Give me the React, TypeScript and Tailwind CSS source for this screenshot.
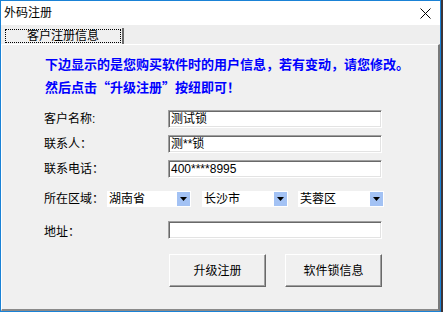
import React from "react";

const font = "font-['Liberation_Sans','Noto_Sans_CJK_SC',sans-serif]";

function TextBox({ value }: { value: string }) {
  return (
    <div className="w-[214px] h-[18px] bg-white border border-t-[#a0a0a0] border-l-[#a0a0a0] border-r-white border-b-white shadow-[inset_1px_1px_0_#696969,inset_-1px_-1px_0_#e3e3e3] flex items-center pl-[2px] text-[12px] leading-none text-black">
      {value}
    </div>
  );
}

function Combo({ value, width }: { value: string; width: string }) {
  return (
    <div className={`${width} h-[16px] bg-white flex items-center justify-between pl-[2px] pr-[1px]`}>
      <span className="text-[12px] leading-none text-black">{value}</span>
      <span className="w-[13px] h-[14px] bg-[#a3c2f4] flex items-center justify-center">
        <svg width="7" height="4" viewBox="0 0 7 4">
          <path d="M0 0h7L3.5 4z" fill="#000" />
        </svg>
      </span>
    </div>
  );
}

function Button({ label }: { label: string }) {
  return (
    <button className="w-[97px] h-[33px] bg-[#f0f0f0] border border-t-white border-l-white border-r-[#696969] border-b-[#696969] shadow-[inset_-1px_-1px_0_#a0a0a0] text-[12px] text-black leading-none">
      {label}
    </button>
  );
}

export default function App() {
  const rows = [
    { label: "客户名称:", value: "测试锁" },
    { label: "联系人：", value: "测**锁" },
    { label: "联系电话：", value: "400****8995" },
  ];

  return (
    <div className={`w-[443px] h-[312px] bg-[#3d3436] ${font}`}>
      <div className="w-[441px] h-[312px] border border-[#1a82d6] flex flex-col bg-[#f0f0f0]">
        {/* Title bar */}
        <div className="h-[24px] bg-white flex items-center justify-between pl-[3px] pr-[9px]">
          <span className="text-[12px] text-black leading-none">外码注册</span>
          <svg width="11" height="11" viewBox="0 0 11 11">
            <path d="M0.5 0.5L10.5 10.5M10.5 0.5L0.5 10.5" stroke="#000" strokeWidth="1" />
          </svg>
        </div>

        {/* Tab strip */}
        <div className="h-[19px] bg-[#eeeeee] flex items-end pl-[3px]">
          <div className="w-[120px] h-[16px] bg-[#f0f0f0] border-r-2 border-r-[#6b6b6b] flex p-[1px]">
            <div className="flex-1 border border-dotted border-black flex items-center justify-center text-[12px] leading-none text-black">
              客户注册信息
            </div>
          </div>
        </div>

        {/* Page */}
        <div className="flex-1 border-t border-l border-t-white border-l-white border-r-2 border-b-2 border-r-[#7a7a7a] border-b-[#8a8a8a] pl-[42px] pt-[7px]">
          <div className="ml-[1px] text-[13px] font-bold leading-[23px] text-[#0000ff] font-['Noto_Sans_CJK_SC',sans-serif]">
            <p>下边显示的是您购买软件时的用户信息，若有变动，请您修改。</p>
            <p>然后点击“升级注册”按纽即可！</p>
          </div>

          <div className="mt-[12px] flex flex-col text-[12px] text-black">
            {rows.map((r, i) => (
              <div key={i} className="flex items-center h-[18px] mb-[7px]">
                <span className="w-[124px] leading-none">{r.label}</span>
                <TextBox value={r.value} />
              </div>
            ))}

            <div className="flex items-center h-[16px] mt-[6px]">
              <span className="w-[63px] leading-none">所在区域：</span>
              <Combo value="湖南省" width="w-[84px]" />
              <div className="w-[11px]" />
              <Combo value="长沙市" width="w-[86px]" />
              <div className="w-[10px]" />
              <Combo value="芙蓉区" width="w-[86px]" />
            </div>

            <div className="flex items-center h-[19px] mt-[13px]">
              <span className="w-[124px] leading-none pt-[4px]">地址：</span>
              <TextBox value="" />
            </div>

            <div className="flex items-center mt-[15px] pl-[125px] gap-[19px]">
              <Button label="升级注册" />
              <Button label="软件锁信息" />
            </div>
          </div>
        </div>
      </div>
    </div>
  );
}
